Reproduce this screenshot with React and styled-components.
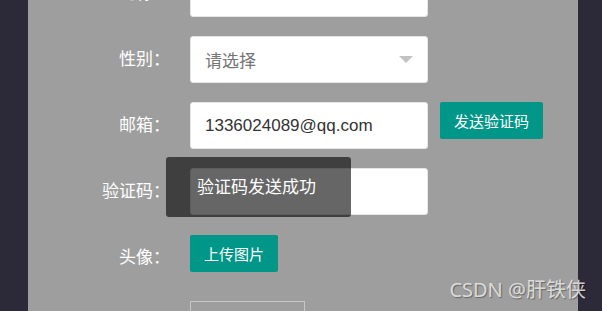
import React from "react";
import styled, { createGlobalStyle } from "styled-components";

const GlobalStyle = createGlobalStyle`
  html, body {
    margin: 0;
    padding: 0;
    overflow: hidden;
  }
  body {
    font-family: "Liberation Sans", "Noto Sans CJK SC", sans-serif;
  }
`;

const Page = styled.div`
  position: relative;
  display: flex;
  width: 602px;
  height: 311px;
  overflow: hidden;
  background-color: #2c2a39;
`;

const SideBar = styled.div`
  width: ${(p) => p.$w}px;
  flex-shrink: 0;
  background-color: #2c2a39;
`;

const Panel = styled.div`
  position: relative;
  flex: 1;
  background-color: #9e9e9e;
  overflow: hidden;
`;

const Form = styled.div`
  display: flex;
  flex-direction: column;
  gap: 19px;
  margin-top: -30px;
`;

const Row = styled.div`
  display: flex;
  align-items: flex-start;
  height: 47px;
`;

const Label = styled.label`
  width: 142px;
  margin-right: 20px;
  flex-shrink: 0;
  text-align: right;
  font-size: 17px;
  line-height: 47px;
  color: #fff;
`;

const Input = styled.div`
  box-sizing: border-box;
  width: 238px;
  height: 47px;
  padding: 0 14px;
  display: flex;
  align-items: center;
  background: #fff;
  border: 1px solid #e6e6e6;
  border-radius: 3px;
  font-size: 17px;
  color: #333;
`;

const Placeholder = styled.span`
  flex: 1;
  color: #757575;
`;

const Arrow = styled.span`
  width: 0;
  height: 0;
  border-left: 7px solid transparent;
  border-right: 7px solid transparent;
  border-top: 7px solid #c2c2c2;
`;

const Button = styled.button`
  box-sizing: border-box;
  height: 37px;
  padding: 0 14px;
  margin-left: ${(p) => p.$ml || 0}px;
  margin-top: ${(p) => (p.$mt ? p.$mt + "px" : "0")};
  border: none;
  border-radius: 2px;
  background-color: #009688;
  color: #fff;
  font-family: inherit;
  font-size: 15px;
  white-space: nowrap;
`;

const Preview = styled.div`
  box-sizing: border-box;
  width: 115px;
  height: 120px;
  margin-top: 1px;
  border: 1px solid #c6c6c6;
`;

const Toast = styled.div`
  position: absolute;
  left: 138px;
  top: 157px;
  width: 185px;
  height: 60px;
  border-radius: 3px;
  background: rgba(0, 0, 0, 0.6);
  color: #fff;
  font-size: 17px;
  display: flex;
  align-items: center;
  justify-content: center;
  padding: 0 4px 3px 0;
  box-sizing: border-box;
`;

const Watermark = styled.div`
  position: absolute;
  right: 16px;
  bottom: 8px;
  font-size: 20px;
  color: rgba(235, 235, 235, 0.85);
  text-shadow: 1px 1px 1px rgba(0, 0, 0, 0.35);
  font-family: "Noto Sans", "Noto Sans CJK SC", sans-serif;
`;

export default function App() {
  return (
    <>
      <GlobalStyle />
      <Page>
        <SideBar $w={28} />
        <Panel>
          <Form>
            <Row>
              <Label>昵称：</Label>
              <Input />
            </Row>
            <Row>
              <Label>性别：</Label>
              <Input>
                <Placeholder>请选择</Placeholder>
                <Arrow />
              </Input>
            </Row>
            <Row>
              <Label>邮箱：</Label>
              <Input>1336024089@qq.com</Input>
              <Button $ml={12}>发送验证码</Button>
            </Row>
            <Row>
              <Label>验证码：</Label>
              <Input />
            </Row>
            <Row>
              <Label>头像：</Label>
              <Button $mt={1}>上传图片</Button>
            </Row>
            <Row>
              <Label />
              <Preview />
            </Row>
          </Form>
          <Toast>验证码发送成功</Toast>
        </Panel>
        <SideBar $w={24} />
        <Watermark>CSDN @肝铁侠</Watermark>
      </Page>
    </>
  );
}
